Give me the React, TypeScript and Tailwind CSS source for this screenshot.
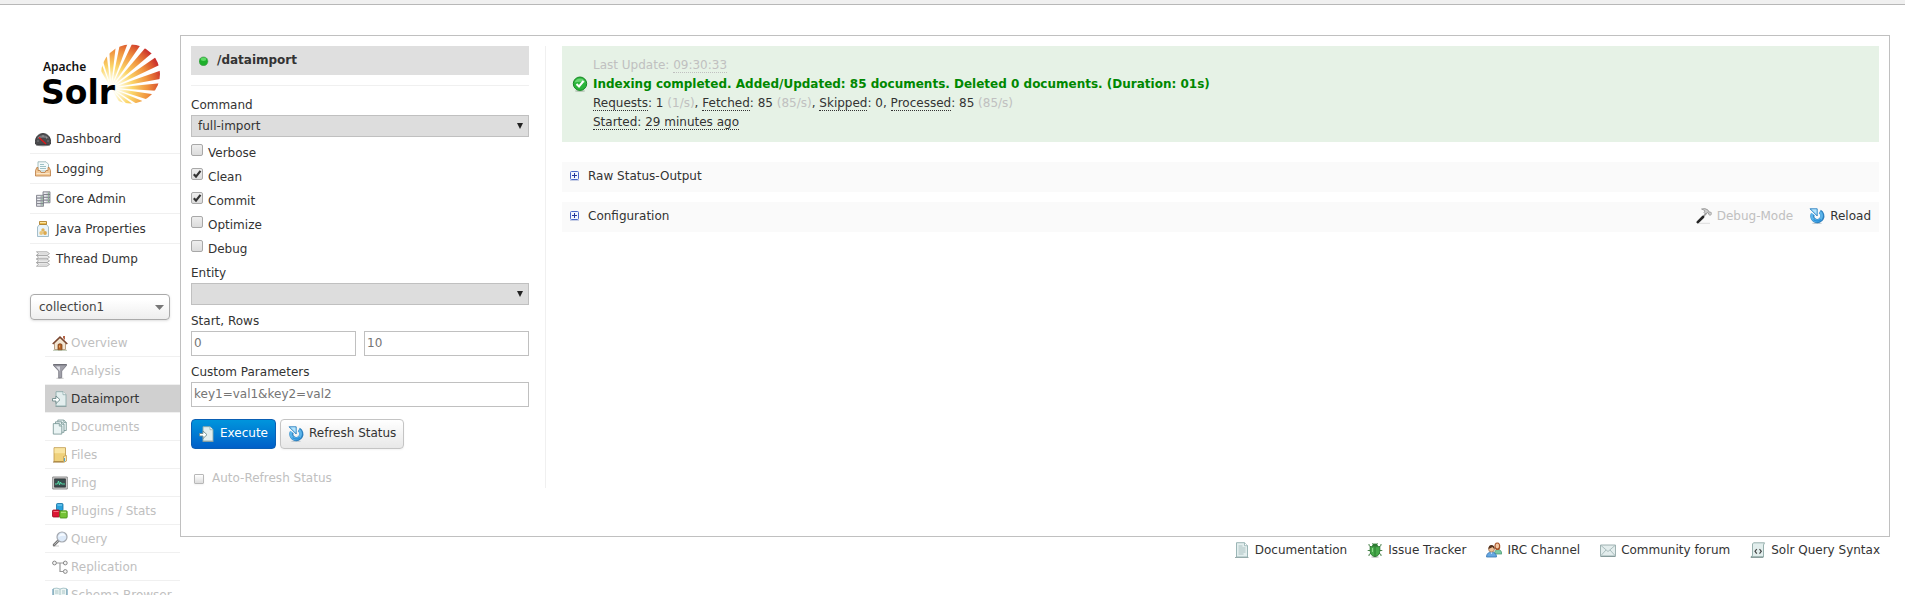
import React, { useState } from "react";

type IconProps = { children: React.ReactNode };

function Icon({ children }: IconProps) {
  return (
    <svg width="16" height="16" viewBox="0 0 16 16" className="shrink-0" aria-hidden="true">
      {children}
    </svg>
  );
}

const DashboardIcon = () => (
  <Icon>
    <ellipse cx="8" cy="14.2" rx="7" ry="1.2" fill="#bbb" />
    <path d="M0.5 13C-0.5 7 3 2.5 8 2.5S16.500 7 15.500 13Q15 14 13 14H3Q1 14 .5 13Z" fill="#4a4a4d" stroke="#2d2d30" strokeWidth=".8" />
    <path d="M2 7.500C4 3 12 3 14 7.500Q8 6 2 7.500Z" fill="#77777b" />
    <path d="M2.500 10h1M4 6.500l.8.8M8 4.500v1M12 6.500l-.8.8M13.500 10h-1" stroke="#ccc" strokeWidth=".8" />
    <path d="M4 6.500L11 13" stroke="#e01818" strokeWidth="1.400" />
  </Icon>
);

const LoggingIcon = () => (
  <Icon>
    <path d="M3 .8h8l2.500 2.500V10H3Z" fill="#f4fafa" stroke="#91aeb0" strokeWidth=".8" />
    <path d="M5 3.500h4M5 5.500h6M5 7.500h6" stroke="#93bac0" strokeWidth=".9" />
    <path d="M1.800 6.500L.5 9.500V15h15V9.500L14.200 6.500H13v3h-2l-1 2H6l-1-2H3v-3Z" fill="#f2c896" stroke="#b97b42" strokeWidth=".8" />
    <path d="M1.500 12.500h13" stroke="#fbe6c8" />
  </Icon>
);

const CoreIcon = () => (
  <Icon>
    {[
      [7.5, 0.3],
      [1, 3.8],
    ].map(([x, y]) => (
      <g key={x} transform={`translate(${x} ${y})`}>
        <path d="M.5.5h7v11h-7Z" fill="#c9cad2" stroke="#777983" strokeWidth=".8" />
        <path d="M1 3.200h6.500M1 6h6.500M1 8.800h6.500" stroke="#6c6e78" strokeWidth=".8" />
        <path d="M1.300 1.900h2.700M1.300 4.600h2.700M1.300 7.400h2.700M1.300 10.100h2.700" stroke="#fafafc" strokeWidth=".9" />
        <path d="M5.500 1.900h1M5.500 4.600h1M5.500 7.400h1M5.500 10.100h1" stroke="#65b465" strokeWidth=".9" />
      </g>
    ))}
  </Icon>
);

const JavaIcon = () => (
  <Icon>
    <path d="M4.500 3.500h7L13.500 6v9.500h-11V6Z" fill="#e8f3f9" stroke="#8faebe" strokeWidth=".8" />
    <path d="M4.500.5h7v3h-7Z" fill="#e9b94c" stroke="#a87922" strokeWidth=".8" />
    <path d="M5 1.500h6" stroke="#fbe6a4" />
    <circle cx="8" cy="9" r="1.700" fill="#e0b45c" />
    <circle cx="6.200" cy="12" r="1.900" fill="#e9c57a" />
    <circle cx="10" cy="12" r="1.900" fill="#dba84e" />
  </Icon>
);

const ThreadIcon = () => (
  <Icon>
    {[0.8, 4.4, 8, 11.6].map((y) => (
      <g key={y}>
        <path d={`M1.500 ${y}h10.500l2.500 1.800-2.500 1.800h-10.500l2-1.800Z`} fill="#f2f2f2" stroke="#999" strokeWidth=".8" />
        <path d={`M4.500 ${y + 1.8}h8`} stroke="#cfcfcf" strokeWidth=".7" />
      </g>
    ))}
  </Icon>
);

const HomeIcon = () => (
  <Icon>
    <path d="M2.500 8L8 3l5.500 5v6.500h-11Z" fill="#f2e5d2" stroke="#ab8a69" strokeWidth=".8" />
    <path d="M11 1h2v4l-2-2Z" fill="#b46346" />
    <path d="M.7 9L8 2l7.300 7" fill="none" stroke="#79452f" strokeWidth="1.500" />
    <path d="M6 15V9.500Q8 7.800 10 9.500V15Z" fill="#b66428" stroke="#743810" strokeWidth=".7" />
    <path d="M7 10.500h1v2H7Z" fill="#e5a462" />
    <path d="M1 15.300h14" stroke="#a7b69a" strokeWidth=".8" />
  </Icon>
);

const FunnelIcon = () => (
  <Icon>
    <ellipse cx="8" cy="15.200" rx="4" ry=".7" fill="#ccc" />
    <path d="M1.500 1.500h13v1L9.700 8v6.500l-3 .5V8L1.500 2.500Z" fill="#a0a0a9" stroke="#74747d" strokeWidth=".8" />
    <path d="M4 3.500h4L7.700 13V8Z" fill="#dddde4" />
    <path d="M1.500 1.700h13" stroke="#6e6e77" strokeWidth="1.300" />
  </Icon>
);

const ImportIcon = () => (
  <Icon>
    <path d="M3.500 15.600h11" stroke="#8d9b9b" />
    <path d="M4 .7h7l3 3V15H4Z" fill="#e3eeee" stroke="#8ca9a9" strokeWidth=".9" />
    <path d="M11 .7v3h3" fill="#fff" stroke="#8ca9a9" strokeWidth=".8" />
    <path d="M.5 7.500h3.500V5l4 3.700-4 3.800V10H.5Z" fill="#fbffff" stroke="#6f8b8b" strokeWidth=".9" />
  </Icon>
);

const DocumentsIcon = () => (
  <Icon>
    {[
      [5.500, 0.7],
      [3.200, 2.500],
      [1, 4.300],
    ].map(([x, y]) => (
      <g key={x} transform={`translate(${x} ${y})`}>
        <path d="M.3.3h6l2.500 2.500v8H.3Z" fill="#eaf4f4" stroke="#71908f" strokeWidth=".8" />
        <path d="M6.300.3v2.500h2.500" fill="none" stroke="#71908f" strokeWidth=".7" />
      </g>
    ))}
  </Icon>
);

const FilesIcon = () => (
  <Icon>
    <path d="M2 .7h11.500V14.500H2Z" fill="#efd17c" stroke="#bd9547" strokeWidth=".8" />
    <path d="M2.500 1.200h10.500v5H2.500Z" fill="#f9e5a3" />
    <path d="M11.500 9.500l3-1V14l-3 1.500Z" fill="#fae9b4" stroke="#bd9547" strokeWidth=".7" />
    <path d="M12.500 11v3.500" stroke="#4da3ce" />
    <path d="M1 15h10" stroke="#9b7530" />
  </Icon>
);

const PingIcon = () => (
  <Icon>
    <path d="M.7 2h14.600v12H.7Z" fill="#d6d6d6" stroke="#858585" strokeWidth=".9" />
    <path d="M2.500 3.800h11v8.400h-11Z" fill="#394b4c" stroke="#222" strokeWidth=".6" />
    <path d="M3 9h2.500L6.500 6l1 4 1-3 1 2H13" fill="none" stroke="#58e5ad" strokeWidth=".9" />
  </Icon>
);

const PluginsIcon = () => (
  <Icon>
    <rect x="4.500" y=".5" width="6.500" height="7" rx="1" fill="#2aa2dc" stroke="#146f9f" strokeWidth=".8" />
    <path d="M5.500 2h4.500" stroke="#8bd5f5" />
    <rect x=".5" y="7" width="7" height="7" rx="1" fill="#dc1735" stroke="#98071e" strokeWidth=".8" />
    <path d="M1.500 8.500h5" stroke="#f56b80" />
    <rect x="7.800" y="7.800" width="7.400" height="7.200" rx="1" fill="#75c236" stroke="#438a13" strokeWidth=".8" />
    <path d="M9 9.300h5" stroke="#b9ea8a" />
  </Icon>
);

const QueryIcon = () => (
  <Icon>
    <path d="M1 15h6" stroke="#ccc" />
    <path d="M6.500 9.500L2 14" stroke="#777" strokeWidth="2.600" strokeLinecap="round" />
    <path d="M6 10l-3.500 3.500" stroke="#bbb" strokeLinecap="round" />
    <circle cx="10" cy="6" r="5" fill="#dce9f8" stroke="#a4a8af" strokeWidth="1.200" />
    <path d="M6.500 6Q7 3 10 2.500T13.500 5Q10 4 6.500 6Z" fill="#f5faff" />
  </Icon>
);

const ReplicationIcon = () => (
  <Icon>
    <path d="M4.500 4h7M8 4v8.500h3.500" fill="none" stroke="#999" strokeWidth="1.200" />
    {[
      [2.500, 4],
      [13.300, 4],
      [13.300, 12.500],
    ].map(([x, y]) => (
      <circle key={`${x}-${y}`} cx={x} cy={y} r="1.900" fill="#f5f5f5" stroke="#888" strokeWidth="1" />
    ))}
  </Icon>
);

const BookIcon = () => (
  <Icon>
    <path d="M.5 2h15v12H.5Z" fill="#4685ab" />
    <path d="M1.500 1.500Q5 .5 8 2q3-1.500 6.500-.5V13Q11 12 8 13.500 5 12 1.500 13Z" fill="#edf5f4" stroke="#8bb0b7" strokeWidth=".7" />
    <path d="M8 2v11M3 4h3.500M3 6h3.500M10 4h3M10 6h3" stroke="#9bbabc" strokeWidth=".8" />
  </Icon>
);

const RefreshIcon = () => (
  <Icon>
    <ellipse cx="8" cy="15.200" rx="5" ry=".8" fill="#bcc8d0" />
    <path d="M10.800 3.700A5 5 0 1 1 3.700 6.200" fill="none" stroke="#2d80bf" strokeWidth="4.200" />
    <path d="M1 .8h7.200V8Z" fill="#8fd0f4" stroke="#2d80bf" strokeWidth=".9" />
    <path d="M10.900 4.100A4.900 4.900 0 1 1 3.500 5.500" fill="none" stroke="#5bb4ea" strokeWidth="2.700" />
    <path d="M2.800 1.600h4.600v4.400Z" fill="#b6e4fb" />
    <path d="M4.500 11.500Q8 14.500 12 11.500" fill="none" stroke="#2b93dc" strokeWidth="1.600" />
  </Icon>
);

const HammerIcon = () => (
  <Icon>
    <path d="M1 15.300h13" stroke="#ddd" />
    <path d="M10.500 5L6.500 9.500" stroke="#999" strokeWidth="1.800" />
    <path d="M7 9L1.800 14.200" stroke="#252525" strokeWidth="2.600" strokeLinecap="round" />
    <path d="M5.500 1Q9-.3 12 2l1 2h1.500L16 5.500 14 7.500 12.500 6V5L11 4.500 9.500 6 8 4.500 9 3Q7.500 1.700 5.500 1Z" fill="#ccc" stroke="#888" strokeWidth=".7" />
  </Icon>
);

const CheckIcon = () => (
  <Icon>
    <ellipse cx="8" cy="15" rx="5" ry=".9" fill="#b4c5b4" />
    <circle cx="8" cy="7.700" r="6.700" fill="#2bb53b" stroke="#168824" />
    <path d="M2.500 6.500Q4 2.500 8 2.500t5.500 4Q8 5 2.500 6.500Z" fill="#68d672" />
    <path d="M4.500 8l2.500 2.500L11.500 5" fill="none" stroke="#fff" strokeWidth="2" />
  </Icon>
);

const PageIcon = () => (
  <Icon>
    <path d="M1 15.500h13.500" stroke="#9baaaa" />
    <path d="M2.500.7h8l3 3V15h-11Z" fill="#e4efef" stroke="#91aeae" strokeWidth=".9" />
    <path d="M10.500.7v3h3" fill="#fff" stroke="#91aeae" strokeWidth=".8" />
    <path d="M4.500 4h4M4.500 6h7M4.500 8h7M4.500 10h7M4.500 12h5" stroke="#9cb6b6" strokeWidth=".8" />
  </Icon>
);

const BugIcon = () => (
  <Icon>
    <ellipse cx="8" cy="15" rx="4" ry=".8" fill="#bbb" />
    <path d="M4 5L2 3.500V2M12 5l2-1.500V2M4 8.500H.7M12 8.500h3.300M4.500 11L2 12.500V14M11.500 11l2.500 1.500V14M6.500 2.500L5.500 1M9.500 2.500L10.500 1" fill="none" stroke="#39763b" strokeWidth=".9" />
    <path d="M5 4.500Q5 1.500 8 1.500t3 3Z" fill="#2c7c31" />
    <path d="M3.200 4.600h9.600Q14 14 8 14.700 2 14 3.200 4.600Z" fill="#46a94a" stroke="#23702a" strokeWidth=".8" />
    <path d="M8 5v9" stroke="#226e29" strokeWidth=".8" />
    <path d="M5.500 6v4" stroke="#91d88d" />
  </Icon>
);

const PeopleIcon = () => (
  <Icon>
    <path d="M8.500 12q0-4.500 3.500-4.500t3.800 4.500Z" fill="#7cc9a2" stroke="#43916c" strokeWidth=".7" />
    <path d="M8.500 6Q7.800.5 11.300.5T14.200 6L13 8H10Z" fill="#a65228" />
    <ellipse cx="11.300" cy="4" rx="1.800" ry="2.400" fill="#f4c7a2" />
    <path d="M.5 15q0-4.800 5-4.800t5 4.800Z" fill="#65a7e2" stroke="#3474b0" strokeWidth=".8" />
    <circle cx="5.500" cy="7" r="3" fill="#efbf96" stroke="#855b3d" strokeWidth=".6" />
    <path d="M2.500 7Q2.500 3 5.500 3t3 4Q7 6 6.500 5 5 6 2.500 7Z" fill="#54331f" />
    <path d="M4.500 10.500l1 1.500 1-1.500Z" fill="#fff" />
  </Icon>
);

const MailIcon = () => (
  <Icon>
    <path d="M.5 3h15v11H.5Z" fill="#e3eded" stroke="#94a9a9" strokeWidth=".9" />
    <path d="M1 3.500l7 6 7-6M1 13.500l5-5.500M15 13.500L10 8" fill="none" stroke="#a4b8b8" strokeWidth=".9" />
    <path d="M.5 14.500h15" stroke="#879b9b" />
  </Icon>
);

const ScriptIcon = () => (
  <Icon>
    <path d="M3.500.8h11L13.500 3v12H1q1.500-.5 1.500-2V2Z" fill="#e2eeed" stroke="#8da9a6" strokeWidth=".9" />
    <path d="M.7 15.200h12.500" stroke="#6f8583" />
    <path d="M6.800 7L5 9.300l1.800 2.300M9.500 7l1.800 2.300-1.800 2.300" fill="none" stroke="#444" strokeWidth="1.200" />
  </Icon>
);

const ExpandIcon = () => (
  <svg width="9" height="10" viewBox="0 0 9 10" className="shrink-0" aria-hidden="true">
    <path d="M0 9.500h9" stroke="#c8cfe6" />
    <rect x=".5" y=".5" width="8" height="8" rx="1" fill="#f2f6ff" stroke="#4a67c8" />
    <path d="M2 4.500h5M4.500 2v5" stroke="#24389c" />
  </svg>
);

const RAYS = [-116, -102, -88, -74, -60, -45, -30, -15, -1, 13, 27, 41, 55];

function rayPath(deg: number) {
  const point = (angle: number) => {
    const rad = (angle * Math.PI) / 180;
    return `${(71 + 80 * Math.cos(rad)).toFixed(2)} ${(45 + 80 * Math.sin(rad)).toFixed(2)}`;
  };
  return `M71 45L${point(deg - 4.5)}L${point(deg + 4.5)}Z`;
}

function Logo() {
  return (
    <svg width="122" height="72" viewBox="0 0 122 72" role="img" aria-label="Apache Solr">
      <defs>
        <clipPath id="sun">
          <circle cx="90.500" cy="31" r="29.500" />
        </clipPath>
        <radialGradient id="ray" gradientUnits="userSpaceOnUse" cx="71" cy="45" r="54">
          <stop offset="0" stopColor="#fff" />
          <stop offset=".16" stopColor="#fffbe0" />
          <stop offset=".4" stopColor="#fbd568" />
          <stop offset=".68" stopColor="#f0943f" />
          <stop offset=".86" stopColor="#dc5a30" />
          <stop offset="1" stopColor="#c4242b" />
        </radialGradient>
      </defs>
      <g clipPath="url(#sun)" fill="url(#ray)">
        {RAYS.map((deg) => (
          <path key={deg} d={rayPath(deg)} />
        ))}
      </g>
      <text x="3" y="28" fontSize="12" fontWeight="600" fontFamily="Noto Sans, sans-serif" fill="#111">
        Apache
      </text>
      <text x="1" y="61" fontSize="33" fontWeight="700" fontFamily="DejaVu Sans, sans-serif" fill="#000">
        Solr
      </text>
    </svg>
  );
}

const MAIN_NAV = [
  { label: "Dashboard", icon: <DashboardIcon /> },
  { label: "Logging", icon: <LoggingIcon /> },
  { label: "Core Admin", icon: <CoreIcon /> },
  { label: "Java Properties", icon: <JavaIcon /> },
  { label: "Thread Dump", icon: <ThreadIcon /> },
];

const CORE_NAV = [
  { label: "Overview", icon: <HomeIcon /> },
  { label: "Analysis", icon: <FunnelIcon /> },
  { label: "Dataimport", icon: <ImportIcon />, active: true },
  { label: "Documents", icon: <DocumentsIcon /> },
  { label: "Files", icon: <FilesIcon /> },
  { label: "Ping", icon: <PingIcon /> },
  { label: "Plugins / Stats", icon: <PluginsIcon /> },
  { label: "Query", icon: <QueryIcon /> },
  { label: "Replication", icon: <ReplicationIcon /> },
  { label: "Schema Browser", icon: <BookIcon /> },
];

const FOOTER_LINKS = [
  { label: "Documentation", icon: <PageIcon /> },
  { label: "Issue Tracker", icon: <BugIcon /> },
  { label: "IRC Channel", icon: <PeopleIcon /> },
  { label: "Community forum", icon: <MailIcon /> },
  { label: "Solr Query Syntax", icon: <ScriptIcon /> },
];

function Sidebar() {
  return (
    <aside className="w-[150px] shrink-0 pt-2">
      <a href="#home" className="block pl-[10px]">
        <Logo />
      </a>
      <nav className="mt-[9px]">
        <ul>
          {MAIN_NAV.map((item) => (
            <li key={item.label} className="border-b border-[#f0f0f0] last:border-transparent">
              <a href="#main" className="flex h-[29px] items-center gap-[5px] pl-[5px]">
                {item.icon}
                {item.label}
              </a>
            </li>
          ))}
        </ul>
      </nav>
      <div className="mt-5 mr-[10px] grid items-center">
        <select
          aria-label="Core"
          className="col-start-1 row-start-1 h-[26px] appearance-none rounded border border-[#aaa] bg-linear-to-b from-white from-20% to-[#eee] px-2 text-[#444] shadow-sm"
        >
          <option>collection1</option>
        </select>
        <svg width="9" height="5" viewBox="0 0 9 5" className="pointer-events-none col-start-1 row-start-1 mr-[6px] justify-self-end" aria-hidden="true">
          <path d="M0 0h9L4.500 5Z" fill="#777" />
        </svg>
      </div>
      <nav className="mt-[9px] ml-[15px]">
        <ul>
          {CORE_NAV.map((item) => (
            <li key={item.label} className="border-b border-[#f0f0f0]">
              <a
                href="#core"
                className={
                  item.active
                    ? "flex h-[27px] items-center gap-[3px] bg-[#d0d0d0] pl-[7px] text-[#333]"
                    : "flex h-[27px] items-center gap-[3px] pl-[7px] text-[#c0c0c0]"
                }
              >
                {item.icon}
                {item.label}
              </a>
            </li>
          ))}
        </ul>
      </nav>
    </aside>
  );
}

function SelectField({ id, label, options }: { id: string; label: string; options: string[] }) {
  return (
    <div className="mb-1">
      <label htmlFor={id} className="block h-[22px] leading-[24px]">
        {label}
      </label>
      <div className="grid items-center">
        <select id={id} className="col-start-1 row-start-1 h-[22px] w-full appearance-none border border-[#c0c0c0] bg-[#ddd] px-[6px]">
          {options.map((option) => (
            <option key={option}>{option}</option>
          ))}
        </select>
        <svg width="6" height="6" viewBox="0 0 6 6" className="pointer-events-none col-start-1 row-start-1 mr-[6px] justify-self-end" aria-hidden="true">
          <path d="M0 0h6L3 6Z" fill="#222" />
        </svg>
      </div>
    </div>
  );
}

function CheckField({ label, initial }: { label: string; initial: boolean }) {
  const [checked, setChecked] = useState(initial);
  return (
    <label className="flex h-6 items-start gap-[5px] leading-6">
      <span className="grid pt-[3px]">
        <input
          type="checkbox"
          checked={checked}
          onChange={() => setChecked(!checked)}
          className="peer col-start-1 row-start-1 size-3 appearance-none rounded-[2px] border border-[#a8a8a8] bg-linear-to-b from-[#eee] to-[#dcdcdc]"
        />
        <svg width="12" height="12" viewBox="0 0 12 12" className="pointer-events-none col-start-1 row-start-1 hidden peer-checked:block" aria-hidden="true">
          <path d="M2.800 6.200L5 8.600 9.500 2.800" fill="none" stroke="#333" strokeWidth="2.200" />
        </svg>
      </span>
      {label}
    </label>
  );
}

const FIELD = "h-[25px] w-full border border-[#c0c0c0] bg-white px-[2px] pb-px placeholder:text-[#757575]";

function ImportForm() {
  return (
    <form className="w-[355px] shrink-0 border-r border-[#f0f0f0] pr-4" onSubmit={(event) => event.preventDefault()}>
      <h2 className="flex h-[29px] items-center gap-2 bg-[#dfdfdf] pl-2 font-bold">
        <svg width="10" height="10" viewBox="0 0 10 10" className="mt-px" aria-hidden="true">
          <circle cx="4.500" cy="5.300" r="4.400" fill="#1eaf2b" stroke="#4d9a55" strokeWidth=".6" />
          <ellipse cx="4.500" cy="3.300" rx="2.800" ry="1.700" fill="#5fd966" />
        </svg>
        <span className="pb-0.5">/dataimport</span>
      </h2>
      <hr className="mt-[10px] mb-[7px] border-[#f0f0f0]" />
      <SelectField id="command" label="Command" options={["full-import", "delta-import"]} />
      <CheckField label="Verbose" initial={false} />
      <CheckField label="Clean" initial={true} />
      <CheckField label="Commit" initial={true} />
      <CheckField label="Optimize" initial={false} />
      <CheckField label="Debug" initial={false} />
      <SelectField id="entity" label="Entity" options={[""]} />
      <label htmlFor="start" className="block h-[22px] leading-[24px]">
        Start, Rows
      </label>
      <div className="mb-1 flex gap-2">
        <input id="start" placeholder="0" className={FIELD} />
        <input aria-label="Rows" placeholder="10" className={FIELD} />
      </div>
      <label htmlFor="custom" className="block h-[22px] leading-[24px]">
        Custom Parameters
      </label>
      <input id="custom" placeholder="key1=val1&key2=val2" className={FIELD} />
      <div className="mt-3 flex gap-1">
        <button
          type="submit"
          className="flex h-[30px] items-center gap-[5px] rounded border border-[#0a5fb4] bg-linear-to-b from-[#0095dc] to-[#005fc8] px-[7px] text-white"
        >
          <ImportIcon />
          <span className="pb-0.5">Execute</span>
        </button>
        <button
          type="button"
          className="flex h-[30px] items-center gap-[5px] rounded border border-[#c4c4c4] bg-linear-to-b from-white to-[#e8e8e8] px-[7px] shadow-xs"
        >
          <RefreshIcon />
          <span className="pb-0.5">Refresh Status</span>
        </button>
      </div>
      <label className="mt-5 flex h-[19px] items-center gap-2 pl-[3px] text-[#c0c0c0]">
        <input
          type="checkbox"
          className="mt-px size-[10px] appearance-none rounded-[1px] border border-[#b8b8b8] bg-linear-to-b from-white to-[#ddd] shadow-xs"
        />
        <span className="pb-0.5">Auto-Refresh Status</span>
      </label>
    </form>
  );
}

function Term({ children }: { children: React.ReactNode }) {
  return <abbr className="border-b border-dotted border-current no-underline">{children}</abbr>;
}

function Status() {
  return (
    <div className="min-w-0 flex-1">
      <section className="flex h-24 gap-[5px] bg-[#e6f2e6] pt-[10px] pl-[10px] leading-[19px]">
        <div className="pt-5">
          <CheckIcon />
        </div>
        <div>
          <p className="text-[#c0c0c0]">
            Last Update: <Term>09:30:33</Term>
          </p>
          <p className="font-bold text-[#080]">
            Indexing completed. Added/Updated: 85 documents. Deleted 0 documents. (Duration: 01s)
          </p>
          <p>
            <Term>Requests</Term>: 1 <span className="text-[#c0c0c0]">(1/s)</span>, <Term>Fetched</Term>: 85{" "}
            <span className="text-[#c0c0c0]">(85/s)</span>, <Term>Skipped</Term>: 0, <Term>Processed</Term>: 85{" "}
            <span className="text-[#c0c0c0]">(85/s)</span>
          </p>
          <p>
            <Term>Started</Term>: <Term>29 minutes ago</Term>
          </p>
        </div>
      </section>
      <section className="mt-5 flex h-[30px] items-center bg-[#fafafa] px-2 pb-0.5">
        <a href="#raw" className="flex items-center gap-[9px]">
          <ExpandIcon />
          Raw Status-Output
        </a>
      </section>
      <section className="mt-[10px] flex h-[30px] items-center justify-between bg-[#fafafa] px-2 pb-0.5">
        <a href="#configuration" className="flex items-center gap-[9px]">
          <ExpandIcon />
          Configuration
        </a>
        <div className="flex gap-4">
          <a href="#debug" className="flex items-center gap-[5px] text-[#c0c0c0]">
            <HammerIcon />
            Debug-Mode
          </a>
          <a href="#reload" className="flex items-center gap-[5px]">
            <RefreshIcon />
            Reload
          </a>
        </div>
      </section>
    </div>
  );
}

export default function App() {
  return (
    <div className="h-screen overflow-hidden bg-white font-['DejaVu_Sans',sans-serif] text-[12px] leading-4 text-[#333]">
      <header className="h-[5px] border-b border-[#b8b8b8] bg-[#f0f0f0]" />
      <div className="flex items-start pt-[30px] pr-[15px] pl-[30px]">
        <Sidebar />
        <div className="min-w-0 flex-1">
          <main className="flex items-start gap-4 border border-[#c0c0c0] px-[10px] pt-[10px] pb-12">
            <ImportForm />
            <Status />
          </main>
          <footer className="mt-[5px] flex justify-end gap-5 pr-[10px]">
            {FOOTER_LINKS.map((item) => (
              <a key={item.label} href="#footer" className="flex items-center gap-[5px]">
                {item.icon}
                {item.label}
              </a>
            ))}
          </footer>
        </div>
      </div>
    </div>
  );
}
